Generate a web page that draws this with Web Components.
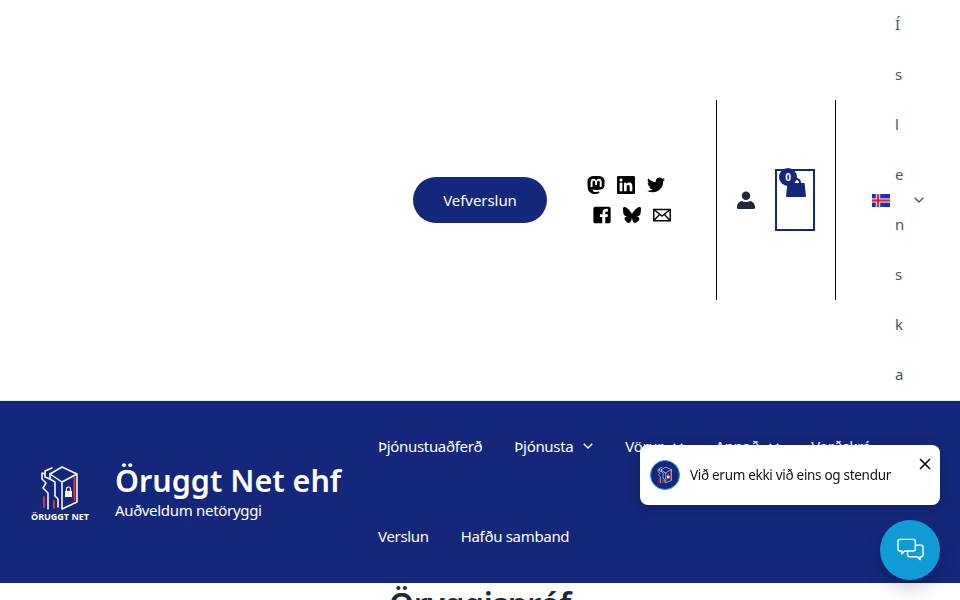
<!DOCTYPE html>
<html lang="is">
<head>
<meta charset="utf-8">
<title>Öruggt Net ehf</title>
<style>
  html, body { margin: 0; height: 600px; overflow: hidden; background: #fff; }
  body { font-family: "Noto Sans", sans-serif; font-size: 16px; color: #334155; }
</style>
</head>
<body>
<template id="logo-mark">
  <svg viewBox="0 0 58 44" fill="none" stroke="#fff" stroke-width="1.5" stroke-linejoin="round" stroke-linecap="round">
    <path d="M19 8 L31 1 L46 8 L31 16 Z M31 16 L31 43 L46 36 L46 8"/>
    <path d="M19 8 L19 13 L24 16 L24 30 M19 13 L14 11 L14 5 L21 2 M14 8 L11 7 L11 13 L15 17 L12 22 L17 27 L17 43"/>
    <path d="M24 30 L27 33 L27 41"/>
    <path d="M13 31 L13 41" stroke="#e03a3e" stroke-width="1.800"/>
    <path d="M23 35 L23 42" stroke="#e03a3e" stroke-width="1.800"/>
    <path d="M43.500 12 L43.500 34" stroke="#e03a3e" stroke-width="1.800"/>
    <rect x="34" y="25" width="7" height="6" fill="#fff" stroke="none"/>
    <path d="M35.500 25 v-2 a2 2 0 0 1 4 0 v2" stroke-width="1.200"/>
  </svg>
</template>

<script>
const ICONS = {
  mastodon: 'M23.268 5.313c-.35-2.578-2.617-4.61-5.304-5.004C17.51.242 15.792 0 11.813 0h-.03c-3.98 0-4.835.242-5.288.309C3.882.692 1.496 2.518.917 5.127.64 6.412.61 7.837.661 9.143c.074 1.874.088 3.745.26 5.611.118 1.24.325 2.47.62 3.68.55 2.237 2.777 4.098 4.96 4.857 2.336.792 4.849.923 7.256.38.265-.061.527-.132.786-.213.585-.184 1.27-.39 1.774-.753a.057.057 0 0 0 .023-.043v-1.809a.052.052 0 0 0-.02-.041.053.053 0 0 0-.046-.01 20.282 20.282 0 0 1-4.709.545c-2.73 0-3.463-1.284-3.674-1.818a5.593 5.593 0 0 1-.319-1.433.053.053 0 0 1 .066-.054c1.517.363 3.072.546 4.632.546.376 0 .75 0 1.125-.01 1.57-.044 3.224-.124 4.768-.422.038-.008.077-.015.11-.024 2.435-.464 4.753-1.92 4.989-5.604.008-.145.03-1.52.03-1.67.002-.512.167-3.63-.024-5.545zm-3.748 9.195h-2.561V8.29c0-1.309-.55-1.976-1.67-1.976-1.23 0-1.846.79-1.846 2.35v3.403h-2.546V8.663c0-1.56-.617-2.35-1.848-2.35-1.112 0-1.668.668-1.67 1.977v6.218H4.822V8.102c0-1.31.337-2.35 1.011-3.12.696-.77 1.608-1.164 2.74-1.164 1.311 0 2.302.5 2.962 1.498l.638 1.06.638-1.06c.66-.999 1.65-1.498 2.96-1.498 1.13 0 2.043.395 2.74 1.164.675.77 1.012 1.81 1.012 3.12z',
  linkedin: 'M20.447 20.452h-3.554v-5.569c0-1.328-.027-3.037-1.852-3.037-1.853 0-2.136 1.445-2.136 2.939v5.667H9.351V9h3.414v1.561h.046c.477-.9 1.637-1.85 3.37-1.85 3.601 0 4.267 2.37 4.267 5.455v6.286zM5.337 7.433c-1.144 0-2.063-.926-2.063-2.065 0-1.138.92-2.063 2.063-2.063 1.14 0 2.064.925 2.064 2.063 0 1.139-.925 2.065-2.064 2.065zm1.782 13.019H3.555V9h3.564v11.452zM22.225 0H1.771C.792 0 0 .774 0 1.729v20.542C0 23.227.792 24 1.771 24h20.451C23.2 24 24 23.227 24 22.271V1.729C24 .774 23.2 0 22.222 0h.003z',
  twitter: 'M23.953 4.57a10 10 0 01-2.825.775 4.958 4.958 0 002.163-2.723c-.951.555-2.005.959-3.127 1.184a4.92 4.92 0 00-8.384 4.482C7.69 8.095 4.067 6.13 1.64 3.162a4.822 4.822 0 00-.666 2.475c0 1.71.87 3.213 2.188 4.096a4.904 4.904 0 01-2.228-.616v.06a4.923 4.923 0 003.946 4.827 4.996 4.996 0 01-2.212.085 4.936 4.936 0 004.604 3.417 9.867 9.867 0 01-6.102 2.105c-.39 0-.779-.023-1.17-.067a13.995 13.995 0 007.557 2.209c9.053 0 13.998-7.496 13.998-13.985 0-.21 0-.42-.015-.63A9.935 9.935 0 0024 4.59z',
  facebook: 'M3 1h18a2.5 2.5 0 0 1 2.5 2.5v17A2.5 2.5 0 0 1 21 23h-4.6v-8.4h3l.5-3.6h-3.5V8.9c0-1 .4-1.7 1.8-1.7h1.9V4c-.5-.1-1.500-.2-2.700-.2-2.700 0-4.600 1.600-4.600 4.700V11H9.200v3.600h3.100V23H3A2.500 2.500 0 0 1 .5 20.500v-17A2.500 2.500 0 0 1 3 1z',
  bluesky: 'M12 10.8c-1.087-2.114-4.046-6.053-6.798-7.995C2.566.944 1.561 1.266.902 1.565.139 1.908 0 3.08 0 3.768c0 .69.378 5.65.624 6.479.815 2.736 3.713 3.66 6.383 3.364.136-.02.275-.039.415-.056-.138.022-.276.04-.415.056-3.912.58-7.387 2.005-2.83 7.078 5.013 5.19 6.87-1.113 7.823-4.308.953 3.195 2.05 9.271 7.733 4.308 4.267-4.308 1.172-6.498-2.74-7.078a8.741 8.741 0 0 1-.415-.056c.14.017.279.036.415.056 2.67.297 5.568-.628 6.383-3.364.246-.828.624-5.79.624-6.478 0-.69-.139-1.861-.902-2.206-.659-.298-1.664-.62-4.3 1.24C16.046 4.748 13.087 8.687 12 10.8Z'
};

class SocialIcon extends HTMLElement {
  connectedCallback() {
    const name = this.getAttribute('name');
    const body = name === 'mail'
      ? '<path d="M1 4.500h22v15H1z" fill="none" stroke="#000" stroke-width="2"/><path d="M1.500 5l10.500 8.500L22.500 5M1.500 19l7.500-8M22.500 19l-7.500-8" fill="none" stroke="#000" stroke-width="1.800"/>'
      : `<path d="${ICONS[name]}" fill="#000"/>`;
    this.attachShadow({ mode: 'open' }).innerHTML = `
      <style>
        :host { display: block; width: 18px; height: 18px; }
        svg { display: block; width: 100%; height: 100%; }
      </style>
      <svg viewBox="0 0 24 24">${body}</svg>`;
  }
}
customElements.define('social-icon', SocialIcon);

class TopBar extends HTMLElement {
  constructor() {
    super();
    this.attachShadow({ mode: 'open' }).innerHTML = `
      <style>
        :host { display: flex; justify-content: flex-end; align-items: center; height: 400px; border-bottom: 1px solid #e5e7eb; }
        .shop { display: flex; justify-content: center; align-items: center; width: 134px; height: 46px; margin-right: 40px; border-radius: 23px; background: #14277a; color: #fff; font-size: 15px; letter-spacing: -.05px; }
        .socials { display: flex; flex-direction: column; gap: 12px; width: 84px; margin-right: 45px; }
        .row { display: flex; gap: 12px; }
        .row + .row { margin-left: 6px; }
        .account { display: flex; align-items: center; height: 200px; width: 118px; border: solid #000; border-width: 0 1px; }
        .user { margin-left: 20px; width: 18px; height: 18px; }
        .cart { position: relative; margin-left: 20px; width: 40px; height: 62px; box-sizing: border-box; border: 2px solid #14277a; }
        .cart svg { position: absolute; left: 9px; top: 7px; width: 20px; height: 20px; }
        .count { position: absolute; left: 2px; top: -3px; width: 18px; height: 18px; border-radius: 50%; background: #14277a; color: #fff; font-size: 10px; font-weight: 700; line-height: 18px; text-align: center; }
        .lang { display: flex; align-items: center; width: 124px; height: 400px; }
        .flag { margin-left: 36px; width: 18px; height: 13px; }
        .word { width: 8px; margin: 0 0 2px 5px; word-break: break-all; line-height: 50px; font-size: 15px; color: #475569; }
        .chev { margin-left: 11px; width: 10px; height: 6px; }
      </style>
      <a class="shop">Vefverslun</a>
      <div class="socials">
        <div class="row">
          <social-icon name="mastodon"></social-icon>
          <social-icon name="linkedin"></social-icon>
          <social-icon name="twitter"></social-icon>
        </div>
        <div class="row">
          <social-icon name="facebook"></social-icon>
          <social-icon name="bluesky"></social-icon>
          <social-icon name="mail"></social-icon>
        </div>
      </div>
      <div class="account">
        <svg class="user" viewBox="0 0 19 19"><circle cx="9.500" cy="5" r="4.500" fill="#1e293b"/><path d="M1 19a2 2 0 0 1-1-2c0-3 2-6 5-6.500 3 1.500 6 1.500 9 0 3 .500 5 3.500 5 6.500a2 2 0 0 1-1 2z" fill="#1e293b"/></svg>
        <div class="cart">
          <svg viewBox="0 0 20 20"><path d="M10 1c3 0 4 1.500 4 4" fill="none" stroke="#14277a" stroke-width="2"/><path d="M1.500 5h17l1.500 13a1 1 0 0 1-1 1H1a1 1 0 0 1-1-1z" fill="#14277a"/></svg>
          <span class="count">0</span>
        </div>
      </div>
      <div class="lang">
        <svg class="flag" viewBox="0 0 18 13"><rect width="18" height="13" fill="#1a2fc0"/><path d="M0 6.500h18M6 0v13" stroke="#d8c8d8" stroke-width="4.500"/><path d="M0 6.500h18M6 0v13" stroke="#e0202a" stroke-width="1.800"/></svg>
        <span class="word">Íslenska</span>
        <svg class="chev" viewBox="0 0 10 6"><path d="M.7.700L5 5l4.300-4.300" fill="none" stroke="#475569" stroke-width="1.300"/></svg>
      </div>`;
  }
}
customElements.define('top-bar', TopBar);

class NavItem extends HTMLElement {
  constructor() {
    super();
    this.attachShadow({ mode: 'open' }).innerHTML = `
      <style>
        :host { display: flex; align-items: center; height: 90px; padding: 0 16px; color: #fff; font-size: 15px; letter-spacing: -.32px; white-space: nowrap; }
        svg { margin-left: 10px; width: 10px; height: 6px; display: none; }
        :host([sub]) svg { display: block; }
      </style>
      <slot></slot>
      <svg viewBox="0 0 10 6"><path d="M.7.700L5 5l4.300-4.300" fill="none" stroke="#fff" stroke-width="1.300"/></svg>`;
  }
}
customElements.define('nav-item', NavItem);

class SiteBrand extends HTMLElement {
  constructor() {
    super();
    this.attachShadow({ mode: 'open' }).innerHTML = `
      <style>
        :host { display: flex; align-items: center; color: #fff; }
        .logo { display: flex; flex-direction: column; align-items: center; width: 60px; margin: 4px 25px 0 0; }
        .logo svg { width: 58px; height: 44px; }
        .logo span { font-size: 9px; font-weight: 700; white-space: nowrap; }
        h1 { margin: 0; font-size: 30.5px; font-weight: 600; line-height: 36px; white-space: nowrap; }
        p { margin: 0; font-size: 15px; letter-spacing: -.3px; line-height: 24px; white-space: nowrap; }
      </style>
      <div class="logo"><span id="m"></span><span>ÖRUGGT NET</span></div>
      <div><h1>Öruggt Net ehf</h1><p>Auðveldum netöryggi</p></div>`;
    this.shadowRoot.getElementById('m').replaceWith(document.getElementById('logo-mark').content.cloneNode(true));
  }
}
customElements.define('site-brand', SiteBrand);

class MainBar extends HTMLElement {
  constructor() {
    super();
    this.attachShadow({ mode: 'open' }).innerHTML = `
      <style>
        :host { display: flex; height: 182px; background: #14277a; padding-left: 30px; }
        site-brand { width: 332px; flex: none; }
        nav { display: flex; flex-wrap: wrap; align-content: flex-start; flex: 1; }
      </style>
      <site-brand></site-brand>
      <nav><slot></slot></nav>`;
  }
}
customElements.define('main-bar', MainBar);

class ChatWidget extends HTMLElement {
  constructor() {
    super();
    this.attachShadow({ mode: 'open' }).innerHTML = `
      <style>
        :host { position: fixed; right: 20px; bottom: 20px; display: flex; flex-direction: column; align-items: flex-end; gap: 15px; }
        .bubble { position: relative; display: flex; align-items: center; width: 300px; height: 60px; box-sizing: border-box; padding-left: 10px; background: #fff; border-radius: 8px; box-shadow: 0 4px 14px rgba(0,0,0,.2); color: #111; font-size: 13.5px; letter-spacing: -.3px; }
        .avatar { display: flex; align-items: center; justify-content: center; width: 30px; height: 30px; margin-right: 10px; border-radius: 50%; background: #14277a; border: 1.5px solid #2f9fe0; box-sizing: border-box; }
        .avatar svg { width: 22px; height: 18px; }
        .close { position: absolute; right: 9px; top: 13px; width: 12px; height: 12px; }
        .btn { display: flex; align-items: center; justify-content: center; width: 60px; height: 60px; border-radius: 50%; background: #109bd6; box-shadow: 0 8px 18px rgba(0,0,0,.18); }
        .btn svg { width: 27px; height: 24px; }
      </style>
      <div class="bubble">
        <span class="avatar"><span id="m"></span></span>
        <span>Við erum ekki við eins og stendur</span>
        <svg class="close" viewBox="0 0 12 12"><path d="M1 1l10 10M11 1L1 11" stroke="#111" stroke-width="1.700"/></svg>
      </div>
      <div class="btn">
        <svg viewBox="0 0 28 24" fill="none" stroke="#fff" stroke-width="1.500" stroke-linejoin="round">
          <path d="M3 1h14a2 2 0 0 1 2 2v8a2 2 0 0 1-2 2H8l-3 3v-3H3a2 2 0 0 1-2-2V3a2 2 0 0 1 2-2z"/>
          <path d="M19 7h6a2 2 0 0 1 2 2v8a2 2 0 0 1-2 2h-1v3l-3-3h-8a2 2 0 0 1-2-2v-4"/>
        </svg>
      </div>`;
    this.shadowRoot.getElementById('m').replaceWith(document.getElementById('logo-mark').content.cloneNode(true));
  }
}
customElements.define('chat-widget', ChatWidget);

class PageTitle extends HTMLElement {
  constructor() {
    super();
    this.attachShadow({ mode: 'open' }).innerHTML = `
      <style>
        :host { display: block; text-align: center; color: #1e293b; }
        h2 { margin: 0; font-size: 32px; font-weight: 600; letter-spacing: -.4px; line-height: 42px; }
      </style>
      <h2><slot></slot></h2>`;
  }
}
customElements.define('page-title', PageTitle);
</script>

<top-bar></top-bar>
<main-bar>
  <nav-item>Þjónustuaðferð</nav-item>
  <nav-item sub>Þjónusta</nav-item>
  <nav-item sub>Vörur</nav-item>
  <nav-item sub>Annað</nav-item>
  <nav-item>Verðskrá</nav-item>
  <nav-item>Verslun</nav-item>
  <nav-item>Hafðu samband</nav-item>
</main-bar>
<page-title>Öryggispróf</page-title>
<chat-widget></chat-widget>
</body>
</html>
